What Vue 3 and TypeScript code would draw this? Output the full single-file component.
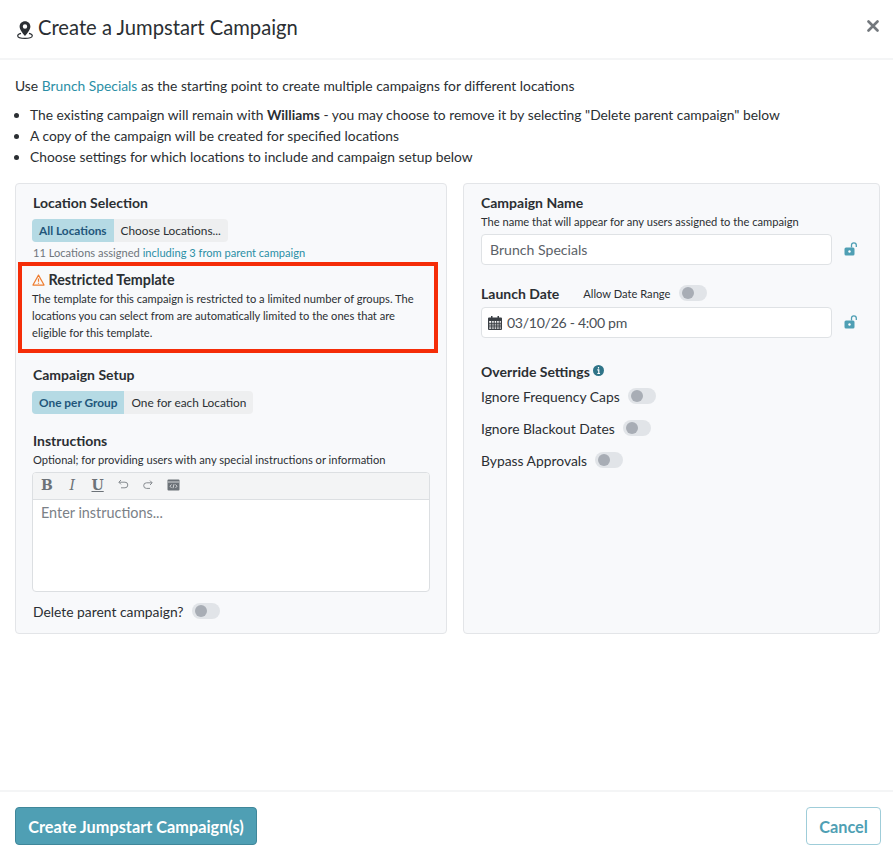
<script setup lang="ts">
const bullets = [
  'A copy of the campaign will be created for specified locations',
  'Choose settings for which locations to include and campaign setup below',
]
const overrides = ['Ignore Frequency Caps', 'Ignore Blackout Dates', 'Bypass Approvals']
</script>

<template>
  <div class="modal">
    <header class="modal-head">
      <svg class="pin" viewBox="0 0 16 18" width="16" height="18">
        <path fill="#2b2f33" d="M8 0.300C4.900 0.300 2.600 2.600 2.600 5.500c0 3.100 3.300 7.300 5.400 9.500 2.100-2.200 5.400-6.400 5.400-9.500C13.400 2.600 11.100 0.300 8 0.300zm0 7.400a2.200 2.200 0 1 1 0-4.400 2.200 2.200 0 0 1 0 4.400z" />
        <path fill="none" stroke="#2b2f33" stroke-width="1.200" d="M4 12.400C2.100 12.900 0.700 13.700 0.700 14.700c0 1.500 3.300 2.600 7.300 2.600s7.300-1.100 7.300-2.600c0-1-1.400-1.800-3.300-2.300" />
      </svg>
      <h1>Create a Jumpstart Campaign</h1>
      <svg class="close" viewBox="0 0 12 12" width="12" height="12">
        <path d="M1.500 1.500l9 9M10.500 1.500l-9 9" stroke="#73787d" stroke-width="2.600" stroke-linecap="round" />
      </svg>
    </header>

    <main class="modal-body">
      <p class="intro">Use <a>Brunch Specials</a> as the starting point to create multiple campaigns for different locations</p>
      <ul class="notes">
        <li>The existing campaign will remain with <b>Williams</b> - you may choose to remove it by selecting "Delete parent campaign" below</li>
        <li v-for="b in bullets" :key="b">{{ b }}</li>
      </ul>

      <div class="columns">
        <section class="panel left">
          <h2>Location Selection</h2>
          <div class="segment">
            <span class="on">All Locations</span><span>Choose Locations...</span>
          </div>
          <p class="assigned">11 Locations assigned <a>including 3 from parent campaign</a></p>

          <div class="restricted">
            <h2>
              <svg viewBox="0 0 14 13" width="13" height="12">
                <path d="M7 1.200L13 12H1z" fill="none" stroke="#ee7d31" stroke-width="1.300" stroke-linejoin="round" />
                <path d="M7 4.800v3.600M7 9.400v1.200" stroke="#ee7d31" stroke-width="1.300" />
              </svg>
              Restricted Template
            </h2>
            <p>The template for this campaign is restricted to a limited number of groups. The locations you can select from are automatically limited to the ones that are eligible for this template.</p>
          </div>

          <h2 class="setup-title">Campaign Setup</h2>
          <div class="segment">
            <span class="on">One per Group</span><span>One for each Location</span>
          </div>

          <h2 class="instr-title">Instructions</h2>
          <p class="hint">Optional; for providing users with any special instructions or information</p>
          <div class="editor">
            <div class="toolbar">
              <span class="tb b">B</span>
              <span class="tb i">I</span>
              <span class="tb u">U</span>
              <svg viewBox="0 0 12 12" width="12" height="12"><path d="M2 3.200h6a2.800 2.800 0 0 1 0 5.600H4M4 1L1.800 3.200 4 5.400" fill="none" stroke="#868b90" stroke-width="1" /></svg>
              <svg viewBox="0 0 12 12" width="12" height="12"><path d="M10 3.800H4.500a2.800 2.800 0 0 0 0 5.600H8M8 1.600l2.200 2.200L8 6" fill="none" stroke="#868b90" stroke-width="1" /></svg>
              <svg viewBox="0 0 13 12" width="13" height="12">
                <rect x="0.500" y="0.500" width="12" height="11" rx="1" fill="#6c7278" />
                <path d="M1 3h11" stroke="#fff" stroke-width="0.700" />
                <path d="M4.500 5.500L3 7.200l1.500 1.700M8.500 5.500L10 7.200 8.500 8.900M7 5.200L6 9.200" fill="none" stroke="#fff" stroke-width="0.700" />
              </svg>
            </div>
            <div class="editor-area">Enter instructions...</div>
          </div>
          <div class="switch-row delete">
            <span>Delete parent campaign?</span><i class="toggle"></i>
          </div>
        </section>

        <section class="panel right">
          <h2>Campaign Name</h2>
          <p class="hint">The name that will appear for any users assigned to the campaign</p>
          <div class="field-row">
            <div class="field">Brunch Specials</div>
            <svg class="lock" viewBox="0 0 14 14" width="14" height="14">
              <rect x="0.500" y="5.500" width="10" height="8" rx="1.500" fill="#4f9fb4" />
              <path d="M7.500 5.500V3.200a2.400 2.400 0 0 1 4.800 0V5" fill="none" stroke="#4f9fb4" stroke-width="1.300" />
              <circle cx="5.500" cy="9.500" r="1.200" fill="#fff" />
            </svg>
          </div>

          <div class="date-head">
            <h2>Launch Date</h2>
            <span>Allow Date Range</span>
            <i class="toggle"></i>
          </div>
          <div class="field-row">
            <div class="field date">
              <svg viewBox="0 0 14 14" width="14" height="14">
                <path fill="#3a3f44" d="M3 0h1.500v1.500h5V0H11v1.500h2a1 1 0 0 1 1 1V13a1 1 0 0 1-1 1H1a1 1 0 0 1-1-1V2.500a1 1 0 0 1 1-1h2zM1.200 5v7.800h11.600V5z" />
                <path stroke="#3a3f44" stroke-width="1" d="M1 7.300h12M1 9.100h12M1 10.900h12M3.700 5v8M6.200 5v8M8.700 5v8M11.200 5v8" />
              </svg>
              <span>03/10/26 - 4:00 pm</span>
            </div>
            <svg class="lock" viewBox="0 0 14 14" width="14" height="14">
              <rect x="0.500" y="5.500" width="10" height="8" rx="1.500" fill="#4f9fb4" />
              <path d="M7.500 5.500V3.200a2.400 2.400 0 0 1 4.800 0V5" fill="none" stroke="#4f9fb4" stroke-width="1.300" />
              <circle cx="5.500" cy="9.500" r="1.200" fill="#fff" />
            </svg>
          </div>

          <h2 class="override-title">
            Override Settings
            <svg viewBox="0 0 12 12" width="11" height="11">
              <circle cx="6" cy="6" r="6" fill="#2f7488" />
              <path d="M6 2.300v1.500M4.700 5.300H6.300V9M4.700 9.300h3" stroke="#fff" stroke-width="1.300" fill="none" />
            </svg>
          </h2>
          <div v-for="o in overrides" :key="o" class="switch-row">
            <span>{{ o }}</span><i class="toggle"></i>
          </div>
        </section>
      </div>
    </main>

    <footer class="modal-foot">
      <button class="primary">Create Jumpstart Campaign(s)</button>
      <button class="cancel">Cancel</button>
    </footer>
  </div>
</template>

<style>
html, body { margin: 0; background: #fff; }
</style>

<style scoped>
.modal {
  width: 893px;
  height: 858px;
  display: flex;
  flex-direction: column;
  box-sizing: border-box;
  font-family: Lato, "Liberation Sans", sans-serif;
  color: #2b2f33;
  font-size: 13.85px;
  overflow: hidden;
}
.modal-head {
  height: 60px;
  box-sizing: border-box;
  border-bottom: 2px solid #f4f5f6;
  display: flex;
  align-items: center;
  padding: 0 14px 5px 17px;
  flex: none;
}
.modal-head h1 {
  font-size: 20.2px;
  font-weight: 400;
  margin: 0 0 0 5px;
  flex: 1;
  line-height: 24px;
}
.pin { margin-top: 6px; }
.close { margin-top: -2px; }
.modal-body { flex: 1; padding: 16px 13px 0 15px; }
a { color: #2b8fa6; }
.intro { margin: 0; line-height: 20px; }
.notes {
  margin: 8px 0 0;
  padding: 0 0 0 15px;
  line-height: 21px;
  font-size: 13.82px;
}
.notes b { font-weight: 700; }
.columns {
  display: grid;
  grid-template-columns: 432px 417px;
  gap: 16px;
  margin-top: 16px;
}
.panel {
  box-sizing: border-box;
  height: 451px;
  background: #f8f9fb;
  border: 1px solid #e3e5e8;
  border-radius: 4px;
  padding: 9px 17px;
}
h2 {
  font-size: 14px;
  font-weight: 700;
  margin: 0;
  line-height: 19px;
}
.segment {
  display: inline-flex;
  margin-top: 7px;
  height: 23px;
  border-radius: 4px;
  overflow: hidden;
  background: #eeeff0;
  font-size: 11.85px;
  line-height: 23px;
  margin-left: -1px;
}
.segment span { padding: 0 7px; }
.segment .on { background: #b5dae4; color: #22567a; font-weight: 700; }
.assigned {
  margin: 3px 0 0;
  font-size: 11.1px;
  line-height: 16px;
  color: #6f757b;
}
.restricted {
  box-sizing: border-box;
  margin: 1px -9px 0 -15px;
  height: 91px;
  border: 4px solid #f52d08;
  padding: 4px 10px;
}
.restricted h2 { font-size: 14.3px; }
.restricted svg { vertical-align: -1px; }
.restricted p {
  margin: 1px 0 0;
  font-size: 11.15px;
  line-height: 17px;
}
.setup-title { margin-top: 12px; }
.instr-title { margin-top: 17px; }
.hint {
  margin: 2px 0 0;
  font-size: 11.15px;
  line-height: 16px;
}
.editor {
  margin-top: 4px;
  margin-left: -1px;
  width: 398px;
  height: 120px;
  box-sizing: border-box;
  border: 1px solid #dcdfe2;
  border-radius: 4px;
  overflow: hidden;
  background: #fff;
}
.toolbar {
  height: 27px;
  box-sizing: border-box;
  background: #f3f4f5;
  border-bottom: 1px solid #dcdfe2;
  display: flex;
  align-items: center;
  gap: 13.25px;
  padding: 0 8px 2px;
  color: #6c7278;
}
.tb {
  font-family: "DejaVu Serif", serif;
  font-size: 14px;
  width: 12px;
  text-align: center;
  line-height: 14px;
}
.tb.b { font-weight: 700; }
.tb.i { font-style: italic; }
.tb.u { text-decoration: underline; font-weight: 700; }
.editor-area {
  padding: 3px 8px;
  font-size: 14.4px;
  line-height: 19px;
  color: #7b8187;
}
.switch-row {
  display: flex;
  align-items: center;
  gap: 8px;
  height: 16px;
  margin-top: 16px;
  white-space: nowrap;
}
.switch-row.delete { margin-top: 11px; }
.toggle {
  position: relative;
  display: block;
  width: 28px;
  height: 16px;
  border-radius: 8px;
  background: #e1e4e8;
  flex: none;
}
.toggle::after {
  content: "";
  position: absolute;
  left: 3px;
  top: 2px;
  width: 12px;
  height: 12px;
  border-radius: 50%;
  background: #a8adb5;
}
.field-row {
  display: flex;
  align-items: center;
  gap: 12px;
  margin-top: 4px;
}
.date-head + .field-row { margin-top: 5px; }
.field {
  box-sizing: border-box;
  width: 351px;
  height: 31px;
  border: 1px solid #dfe2e5;
  border-radius: 4px;
  background: #fff;
  padding: 0 8px;
  line-height: 29px;
  font-size: 14.1px;
  color: #5c6268;
}
.field.date {
  display: flex;
  align-items: center;
  gap: 5px;
  padding: 0 6px;
  color: #4a5056;
}
.field.date span { letter-spacing: -0.3px; }
.lock { margin-top: -2px; }
.date-head {
  display: flex;
  align-items: center;
  margin-top: 19px;
  height: 18px;
}
.date-head span { margin-left: 24px; font-size: 11.15px; margin-right: 9px; }
.override-title { margin-top: 24px; }
.override-title svg { vertical-align: 1px; }
.override-title + .switch-row { margin-top: 7px; }
.modal-foot {
  flex: none;
  height: 68px;
  box-sizing: border-box;
  border-top: 2px solid #f4f5f6;
  display: flex;
  justify-content: space-between;
  align-items: flex-start;
  padding: 15px 12px 0 15px;
}
button {
  font-family: inherit;
  font-weight: 700;
  font-size: 16.3px;
  height: 38px;
  border-radius: 4px;
  cursor: pointer;
}
.primary {
  width: 242px;
  padding: 0;
  background: #4f9fb4;
  color: #fff;
  border: 1px solid #40879a;
}
.cancel {
  width: 75px;
  padding: 0;
  background: #fff;
  color: #4f9fb4;
  border: 1px solid #9fcdd9;
}
</style>
